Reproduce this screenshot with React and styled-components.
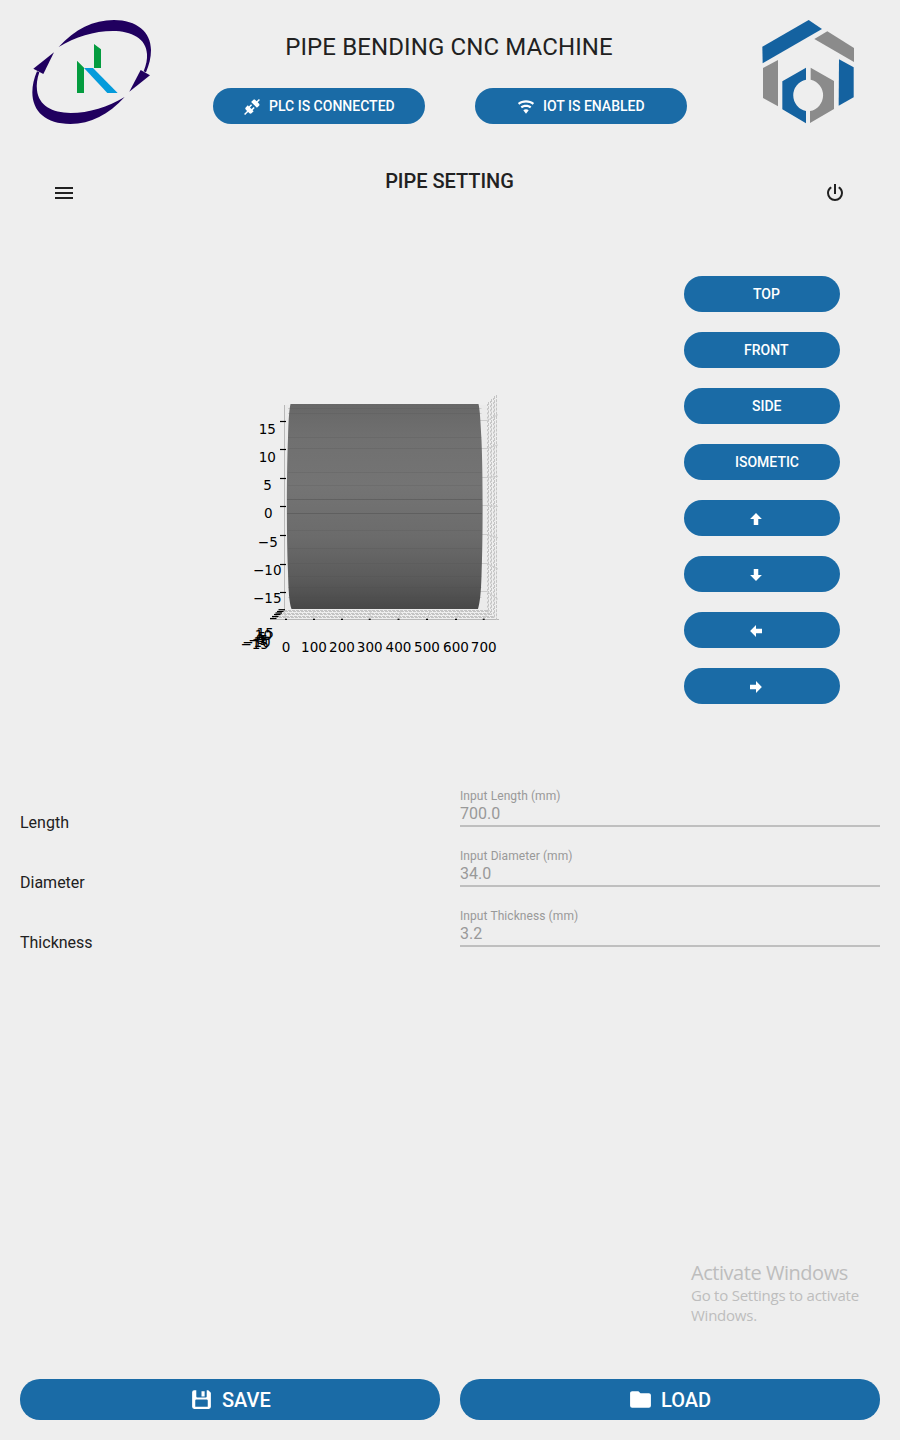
import React from "react";
import styled, { createGlobalStyle } from "styled-components";

const BLUE = "#1a6ba6";

const Global = createGlobalStyle`
  * { box-sizing: border-box; }
  body { margin: 0; background: #eeeeee; color: #212121; font-family: Roboto, sans-serif; }
`;

const Page = styled.main`
  display: flex;
  flex-direction: column;
  width: 900px;
  height: 1440px;
  overflow: hidden;
  background: #eeeeee;
`;

const Header = styled.header`
  display: flex;
  justify-content: space-between;
  height: 145px;
  padding: 10px 30px 0 20px;
`;

const Branding = styled.div`
  display: flex;
  flex-direction: column;
  align-items: center;
  padding: 23px 15px 0 0;
`;

const Title = styled.h1`
  margin: 0 0 27px -2px;
  font-size: 24px;
  line-height: 28px;
  font-weight: 400;
  letter-spacing: 0.12px;
  white-space: nowrap;
`;

const StatusRow = styled.div`
  display: flex;
  gap: 50px;
`;

const Pill = styled.button`
  display: flex;
  align-items: center;
  width: ${(p) => p.$width || "100%"};
  height: ${(p) => p.$height || "36px"};
  padding: 0 0 0 ${(p) => p.$inset || "0"};
  gap: 8px;
  border: 0;
  border-radius: 20px;
  background: ${BLUE};
  color: #fff;
  font: 500 ${(p) => p.$size || "14px"} / 20px Roboto, sans-serif;
  white-space: nowrap;
`;

const Icon = styled.svg`
  flex: none;
  width: ${(p) => p.$size || 24}px;
  height: ${(p) => p.$size || 24}px;
  margin-top: ${(p) => p.$drop || 0}px;
  fill: currentColor;
`;

const Toolbar = styled.nav`
  display: flex;
  justify-content: space-between;
  height: 105px;
  padding: 26px 53px 0 52px;
`;

const IconButton = styled.button`
  display: flex;
  height: 24px;
  margin-top: 10px;
  padding: 0;
  border: 0;
  background: none;
  color: #212121;
`;

const ScreenTitle = styled.h2`
  margin: 0;
  font-size: 20px;
  line-height: 20px;
  font-weight: 500;
  letter-spacing: -0.03px;
`;

const Viewer = styled.section`
  display: flex;
  justify-content: space-between;
  height: 530px;
  padding: 26px 60px 0 230px;
`;

const Plot = styled.svg`
  width: 280px;
  height: 290px;
  margin-top: 104px;
  font-family: "DejaVu Sans", sans-serif;
  font-size: 13.5px;
`;

const Controls = styled.div`
  display: flex;
  flex-direction: column;
  gap: 20px;
  width: 156px;
`;

const Form = styled.section`
  display: flex;
  flex-direction: column;
  height: 180px;
  padding: 0 20px;
`;

const Row = styled.label`
  display: grid;
  grid-template-columns: 420px 420px;
  column-gap: 20px;
  height: 60px;
`;

const Name = styled.span`
  padding-top: 33px;
  font-size: 16px;
  line-height: 20px;
`;

const Field = styled.span`
  display: flex;
  flex-direction: column;
  height: 47px;
  padding-top: 9px;
  border-bottom: 2px solid #bfbfbf;
  color: #999999;
`;

const Hint = styled.span`
  font-size: 12px;
  line-height: 14px;
  letter-spacing: 0.08px;
`;

const Value = styled.span`
  font-size: 16px;
  line-height: 20px;
  padding-top: 1px;
`;

const Notice = styled.aside`
  align-self: flex-end;
  width: 209px;
  margin-top: 301px;
  color: #bdbdbd;
  font: 400 15px/20px "Open Sans", "Noto Sans", sans-serif;
`;

const NoticeTitle = styled.div`
  font-size: 20px;
  line-height: 24px;
  letter-spacing: -0.46px;
`;

const NoticeText = styled.div`
  letter-spacing: -0.24px;
`;

const Footer = styled.footer`
  display: grid;
  grid-template-columns: 1fr 1fr;
  gap: 20px;
  margin-top: auto;
  padding: 0 20px 20px;
`;

const paths = {
  connection:
    "M21.4,7.5C22.2,8.3 22.2,9.6 21.4,10.3L18.6,13.1L10.8,5.3L13.6,2.5C14.4,1.7 15.7,1.7 16.4,2.5L18.2,4.3L21.2,1.3L22.6,2.7L19.6,5.7L21.4,7.5M15.6,13.3L14.2,11.9L11.4,14.7L9.3,12.6L12.1,9.8L10.7,8.4L7.9,11.2L6.4,9.8L3.6,12.6C2.8,13.4 2.8,14.7 3.6,15.4L5.4,17.2L1.4,21.2L2.8,22.6L6.8,18.6L8.6,20.4C9.4,21.2 10.7,21.2 11.4,20.4L14.2,17.6L12.8,16.2L15.6,13.3Z",
  wifi: "M12,21L15.6,16.2C14.6,15.45 13.35,15 12,15C10.65,15 9.4,15.45 8.4,16.2L12,21M12,3C7.95,3 4.21,4.34 1.2,6.6L3,9C5.5,7.12 8.62,6 12,6C15.38,6 18.5,7.12 21,9L22.8,6.6C19.79,4.34 16.05,3 12,3M12,9C9.3,9 6.81,9.89 4.8,11.4L6.6,13.8C8.1,12.67 9.97,12 12,12C14.03,12 15.9,12.67 17.4,13.8L19.2,11.4C17.19,9.89 14.7,9 12,9Z",
  menu: "M3,6H21V8H3V6M3,11H21V13H3V11M3,16H21V18H3V16Z",
  power:
    "M16.56,5.44L15.11,6.89C16.84,7.94 18,9.83 18,12A6,6 0 0,1 12,18A6,6 0 0,1 6,12C6,9.83 7.16,7.94 8.88,6.88L7.44,5.44C5.36,6.88 4,9.28 4,12A8,8 0 0,0 12,20A8,8 0 0,0 20,12C20,9.28 18.64,6.88 16.56,5.44M13,3H11V13H13V3",
  arrow: "M15,20H9V12H4.16L12,4.16L19.84,12H15V20Z",
  floppy:
    "M5,3A2,2 0 0,0 3,5V19A2,2 0 0,0 5,21H19A2,2 0 0,0 21,19V5.5L18.5,3H17V9A1,1 0 0,1 16,10H8A1,1 0 0,1 7,9V3H5M12,4V9H15V4H12M7,12H17A1,1 0 0,1 18,13V19H6V13A1,1 0 0,1 7,12Z",
  folder:
    "M10,4H4C2.89,4 2,4.89 2,6V18A2,2 0 0,0 4,20H20A2,2 0 0,0 22,18V8C22,6.89 21.1,6 20,6H12L10,4Z",
};

function Glyph({ name, size, drop, turn = 0 }) {
  return (
    <Icon viewBox="0 0 24 24" $size={size} $drop={drop} aria-hidden="true">
      <path d={paths[name]} transform={`rotate(${turn} 12 12)`} />
    </Icon>
  );
}

function OrbitLogo() {
  return (
    <svg width="145" height="125" viewBox="0 0 435 375">
      <g fill="#20005f">
        <path d="M116 111C165 57 220 30 282 30C350 30 393 66 393 120C393 144 387 165 378 187L371 184C379 164 382 148 381 132C379 86 335 63 278 63C223 63 165 81 116 111Z" />
        <path d="M328 245L362 180L390 196Z" />
        <path d="M314 261C265 314 213 342 151 342C78 342 37 305 37 247C37 226 42 205 51 184L58 187C51 207 49 224 51 241C56 286 96 309 152 309C207 309 264 291 314 261Z" />
        <path d="M102 127L70 192L40 176Z" />
      </g>
      <path fill="#049c3f" d="M171 152L192 173V249H171ZM222 102L243 118V174H222Z" />
      <path fill="#049bdb" d="M192 174H219L293 249H262Z" />
    </svg>
  );
}

function HexLogo() {
  return (
    <svg width="120" height="125" viewBox="0 0 360 375">
      <g fill="#1462a0">
        <path d="M37 110L176 30L216 57L38 160Z" />
        <path d="M267 148L311 172V262L266 287Z" />
        <path d="M97 214L168 173V209A48 48 0 0 0 168 303V340L97 298Z" />
      </g>
      <g fill="#8b8b8b">
        <path d="M193 87L232 64L312 114V156Z" />
        <path d="M39 174L84 150V289L39 264Z" />
        <path d="M182 173L252 213V297L180 339V303A48 48 0 0 0 182 209Z" />
      </g>
    </svg>
  );
}

const zTicks = [
  ["15", 267.3, 434, 421.5],
  ["10", 267.3, 462, 449.5],
  ["5", 267.5, 490, 478.5],
  ["0", 268.3, 518, 506.5],
  ["−5", 267.8, 547, 535.5],
  ["−10", 267.3, 575, 564.5],
  ["−15", 267.3, 603, 592.5],
];
const xTicks = [286, 314, 342, 369.7, 398.5, 427, 456, 483.7];
const depthTicks = ["−15", "−10", "−5", "0", "5", "10", "15"];
const depthMarks = [
  [270, 618.5],
  [272, 616.5],
  [274, 614.5],
  [275.5, 613],
  [277, 611.5],
  [278.5, 609.7],
];
const seams = [408.5, 413.5, 437.5, 448.5, 472.5, 485.5, 530.5, 548.5, 563.5, 576.5, 587.5, 597.5];

function PipePlot() {
  return (
    <Plot viewBox="230 380 280 290">
      <defs>
        <linearGradient id="steel" x1="0" y1="0" x2="0" y2="1">
          <stop offset="0" stopColor="#676767" />
          <stop offset="0.17" stopColor="#707070" />
          <stop offset="0.4" stopColor="#747474" />
          <stop offset="0.65" stopColor="#6b6b6b" />
          <stop offset="0.85" stopColor="#5b5b5b" />
          <stop offset="1" stopColor="#484848" />
        </linearGradient>
      </defs>
      <path d="M284.5 405V610L270 619.5H499" fill="none" stroke="#b8b8b8" />
      <path d="M285 405H487V610H285Z" fill="#ebebeb" />
      <g stroke="#c4c4c4" strokeWidth="1">
        {[610.5, 613.5, 616.5].map((y, i) => (
          <g key={y}>
            <path d={`M${284 - i * 5} ${y}H${488 + i * 3}`} strokeDasharray="3 1" />
            <path d={`M${283 - i * 5} ${y + 1}H${489 + i * 3}`} strokeDasharray="3 1" strokeDashoffset="2" />
          </g>
        ))}
        {[488.5, 491.5, 494.5].map((x, i) => (
          <g key={x}>
            <path d={`M${x} ${402 - i * 3}V${612 + i * 3}`} strokeDasharray="3 1.2" />
            <path d={`M${x - 1} ${404 - i * 3}V${611 + i * 3}`} strokeDasharray="2 2.2" />
          </g>
        ))}
        <path d="M496.5 395V620" strokeDasharray="3 1.2" />
      </g>
      <g stroke="#cbcbcb" fill="none">
        {zTicks.map(([label, , , y]) => (
          <path key={label} d={`M480 ${y - 1}H487L498 ${y - (507 - y) * 0.08}`} />
        ))}
        {xTicks.map((x) => (
          <path key={x} d={`M${x} 619L${x + (385 - x) * -0.04 + 2} 610`} />
        ))}
      </g>
      <path
        fill="url(#steel)"
        d="M290.5 404H478.5C480 410 480.5 422 481.5 440C483 475 483 540 481.5 576C481 592 480 602 478 609H291.5C289 602 288.5 590 288 572C286.5 535 286.5 475 288 438C288.5 421 289 411 290.5 404Z"
      />
      <g stroke="#505050" strokeOpacity="0.18">
        {seams.map((y) => (
          <path key={y} d={`M288 ${y}H481.5`} />
        ))}
      </g>
      <path d="M287 499.5H482M287 513.5H482" stroke="#505050" strokeOpacity="0.5" />
      <g stroke="#000" strokeWidth="1.2">
        {zTicks.map(([label, , , y]) => (
          <path key={label} d={`M280 ${y}H286`} />
        ))}
        {xTicks.map((x) => (
          <path key={x} d={`M${x - 1} 619.3H${x + 1}`} />
        ))}
        {depthMarks.map(([x, y]) => (
          <path key={x} d={`M${x} ${y}H${x + 6.5}`} />
        ))}
      </g>
      <g fill="#000" textAnchor="middle">
        {zTicks.map(([label, x, y]) => (
          <text key={label} x={x} y={y}>{label}</text>
        ))}
        {xTicks.map((x, i) => (
          <text key={x} x={x} y="652">{i * 100}</text>
        ))}
        {depthTicks.map((label, i) => (
          <text key={label} x={254.7 + i * 1.75} y={649 - i * 1.8}>{label}</text>
        ))}
      </g>
    </Plot>
  );
}

const views = [
  ["TOP", "69px"],
  ["FRONT", "60px"],
  ["SIDE", "68px"],
  ["ISOMETIC", "51px"],
];
const turns = [["Up", 0], ["Down", 180], ["Left", -90], ["Right", 90]];
const fields = [
  ["Length", "700.0"],
  ["Diameter", "34.0"],
  ["Thickness", "3.2"],
];

export default function App() {
  return (
    <Page>
      <Global />
      <Header>
        <OrbitLogo />
        <Branding>
          <Title>PIPE BENDING CNC MACHINE</Title>
          <StatusRow>
            <Pill $width="212px" $inset="30px">
              <Glyph name="connection" size={18} drop={2} />
              PLC IS CONNECTED
            </Pill>
            <Pill $width="212px" $inset="42px">
              <Glyph name="wifi" size={18} drop={2} />
              IOT IS ENABLED
            </Pill>
          </StatusRow>
        </Branding>
        <HexLogo />
      </Header>
      <Toolbar>
        <IconButton aria-label="Menu"><Glyph name="menu" /></IconButton>
        <ScreenTitle>PIPE SETTING</ScreenTitle>
        <IconButton aria-label="Power"><Glyph name="power" /></IconButton>
      </Toolbar>
      <Viewer>
        <PipePlot />
        <Controls>
          {views.map(([label, inset]) => (
            <Pill key={label} $inset={inset}>{label}</Pill>
          ))}
          {turns.map(([label, turn]) => (
            <Pill key={label} $inset="63px" aria-label={label}>
              <Glyph name="arrow" size={18} drop={2} turn={turn} />
            </Pill>
          ))}
        </Controls>
      </Viewer>
      <Form>
        {fields.map(([name, value]) => (
          <Row key={name}>
            <Name>{name}</Name>
            <Field>
              <Hint>Input {name} (mm)</Hint>
              <Value>{value}</Value>
            </Field>
          </Row>
        ))}
      </Form>
      <Notice>
        <NoticeTitle>Activate Windows</NoticeTitle>
        <NoticeText>Go to Settings to activate</NoticeText>
        <NoticeText>Windows.</NoticeText>
      </Notice>
      <Footer>
        <Pill $height="41px" $size="20px" $inset="169px">
          <Glyph name="floppy" size={25} />
          SAVE
        </Pill>
        <Pill $height="41px" $size="20px" $inset="168px">
          <Glyph name="folder" size={25} />
          LOAD
        </Pill>
      </Footer>
    </Page>
  );
}
